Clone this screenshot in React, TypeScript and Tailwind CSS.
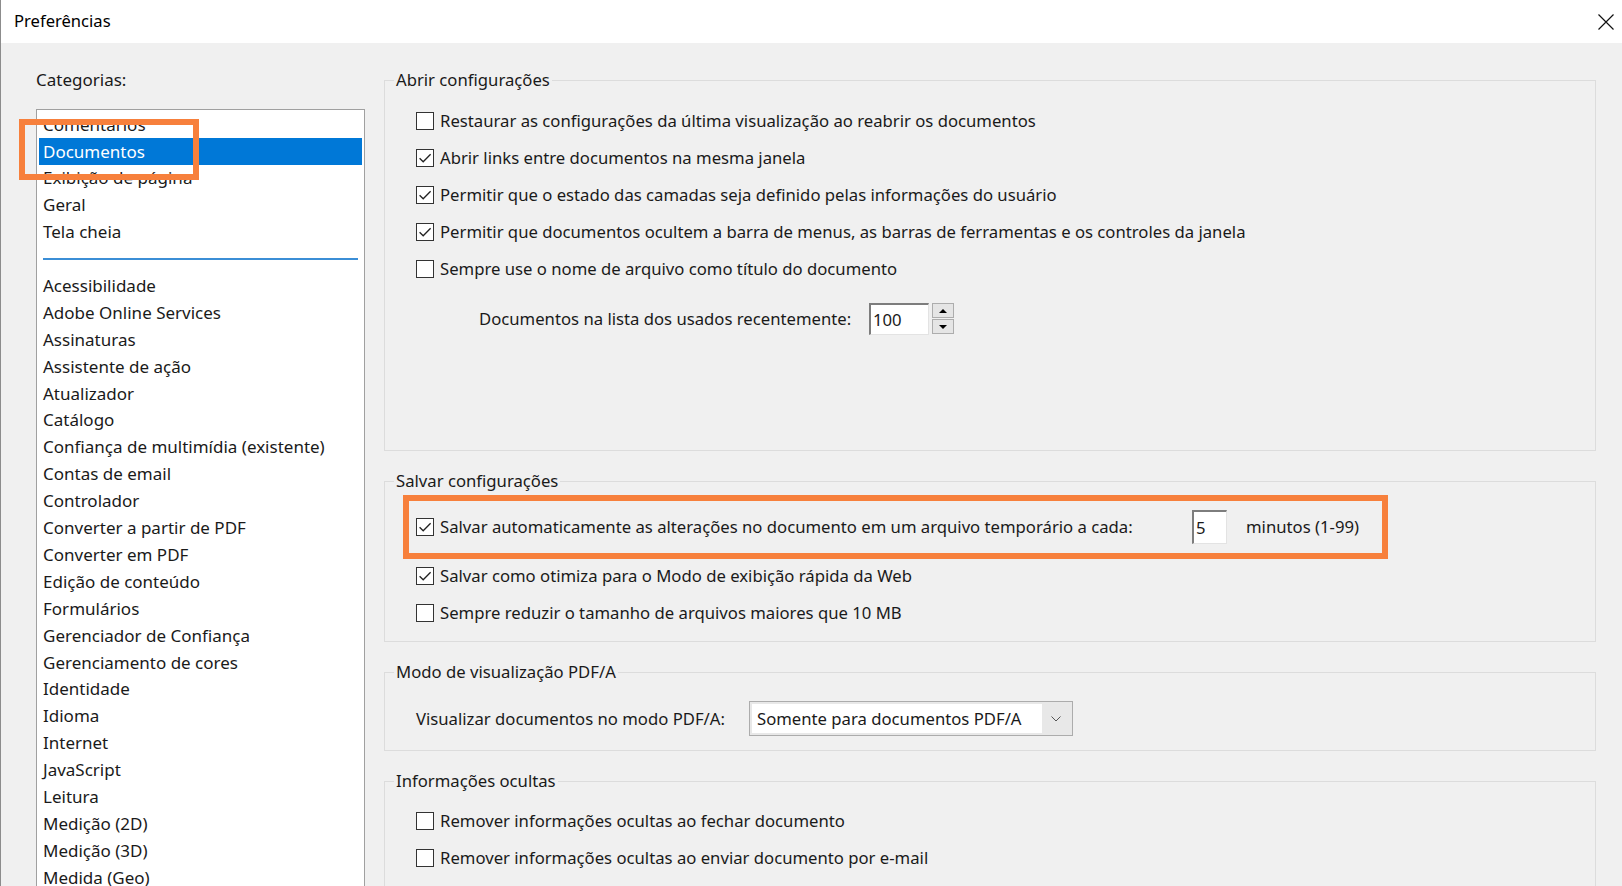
import React from "react";

const topCategories = ["Comentários", "Documentos", "Exibição de página", "Geral", "Tela cheia"];

const categories = [
  "Acessibilidade",
  "Adobe Online Services",
  "Assinaturas",
  "Assistente de ação",
  "Atualizador",
  "Catálogo",
  "Confiança de multimídia (existente)",
  "Contas de email",
  "Controlador",
  "Converter a partir de PDF",
  "Converter em PDF",
  "Edição de conteúdo",
  "Formulários",
  "Gerenciador de Confiança",
  "Gerenciamento de cores",
  "Identidade",
  "Idioma",
  "Internet",
  "JavaScript",
  "Leitura",
  "Medição (2D)",
  "Medição (3D)",
  "Medida (Geo)",
];

function Checkbox({ checked }: { checked?: boolean }) {
  return (
    <span className="flex h-[18px] w-[18px] shrink-0 items-center justify-center border border-[#333333] bg-white">
      {checked && (
        <svg viewBox="0 0 16 16" className="h-[16px] w-[16px]">
          <path d="M2.6 8.2 L6.2 11.8 L13.6 4.3" fill="none" stroke="#222222" strokeWidth="1.3" />
        </svg>
      )}
    </span>
  );
}

function CheckRow({ checked, label }: { checked?: boolean; label?: string }) {
  return (
    <div className="flex h-[37px] items-center gap-[6px]">
      <Checkbox checked={checked} />
      {label && <span className="whitespace-nowrap">{label}</span>}
    </div>
  );
}

function Group({ title, className, children }: { title: string; className: string; children: React.ReactNode }) {
  return (
    <fieldset className={"border border-[#dcdcdc] pl-[9px] " + className}>
      <legend className="px-[2px] leading-[24px]">{title}</legend>
      <div className="pl-[22px]">{children}</div>
    </fieldset>
  );
}

function Spinner() {
  return (
    <div className="ml-[3px] flex h-[32px] w-[22px] flex-col gap-[1px]">
      <button className="flex h-[15px] items-center justify-center border border-[#adadad] bg-[#e5e5e5]">
        <svg viewBox="0 0 8 4" className="h-[4px] w-[8px]">
          <path d="M0 4 L4 0 L8 4 Z" fill="#000" />
        </svg>
      </button>
      <button className="flex h-[15px] items-center justify-center border border-[#adadad] bg-[#e5e5e5]">
        <svg viewBox="0 0 8 4" className="h-[4px] w-[8px]">
          <path d="M0 0 L4 4 L8 0 Z" fill="#000" />
        </svg>
      </button>
    </div>
  );
}

export default function App() {
  return (
    <div className="flex h-[886px] w-[1622px] flex-col overflow-hidden border-l border-[#8c8c8c] bg-[#f0f0f0] font-['Noto_Sans',sans-serif] text-[17px] text-[#1a1a1a]">
      {/* Title bar */}
      <div className="flex h-[43px] shrink-0 items-center justify-between bg-white pl-[13px] pr-[8px]">
        <span className="text-[16.6px] text-black">Preferências</span>
        <svg viewBox="0 0 16 16" className="h-[16px] w-[16px]">
          <path d="M0.5 0.5 L15.5 15.5 M15.5 0.5 L0.5 15.5" stroke="#111" strokeWidth="1.2" />
        </svg>
      </div>

      <div className="flex flex-1">
        {/* Categories */}
        <div className="w-[383px] shrink-0 pl-[35px] pt-[25px]">
          <div className="leading-[24px]">Categorias:</div>
          <div className="mt-[17px] h-[800px] w-[329px] overflow-hidden border border-[#a0a0a0] bg-white pt-[1px]">
            {topCategories.map((c) => (
              <div
                key={c}
                className={
                  "mx-[2px] flex h-[26.9px] items-center pl-[4px] " +
                  (c === "Documentos" ? "bg-[#0078d7] text-white" : "")
                }
              >
                {c}
              </div>
            ))}
            <div className="flex h-[26.9px] items-center px-[6px]">
              <div className="h-[2px] w-full bg-[#3b8ed6]" />
            </div>
            {categories.map((c) => (
              <div key={c} className="mx-[2px] flex h-[26.9px] items-center pl-[4px]">
                {c}
              </div>
            ))}
          </div>
        </div>

        {/* Settings */}
        <div className="flex w-[1212px] shrink-0 flex-col pt-[25px] text-[16.7px]">
          <Group title="Abrir configurações" className="h-[383px]">
            <div className="pt-[10px]">
              <CheckRow label="Restaurar as configurações da última visualização ao reabrir os documentos" />
              <CheckRow checked label="Abrir links entre documentos na mesma janela" />
              <CheckRow checked label="Permitir que o estado das camadas seja definido pelas informações do usuário" />
              <CheckRow
                checked
                label="Permitir que documentos ocultem a barra de menus, as barras de ferramentas e os controles da janela"
              />
              <CheckRow label="Sempre use o nome de arquivo como título do documento" />
              <div className="mt-[16px] flex h-[32px] items-center pl-[63px]">
                <span className="w-[390px]">Documentos na lista dos usados recentemente:</span>
                <div className="flex h-[32px] w-[60px] items-center border-l-2 border-t-2 border-b border-r border-l-[#7d7d7d] border-t-[#7d7d7d] border-b-[#e3e3e3] border-r-[#e3e3e3] bg-white pl-[2px]">
                  100
                </div>
                <Spinner />
              </div>
            </div>
          </Group>

          <Group title="Salvar configurações" className="mt-[18px] h-[173px]">
            <div className="ml-[-13px] mt-[2px] flex h-[64px] w-[985px] items-center border-[6px] border-[#f7803c] pl-[7px]">
              <Checkbox checked />
              <span className="ml-[6px] w-[746px] whitespace-nowrap">
                Salvar automaticamente as alterações no documento em um arquivo temporário a cada:
              </span>
              <div className="ml-[6px] flex h-[34px] w-[35px] items-center border-l-2 border-t-2 border-b border-r border-l-[#7d7d7d] border-t-[#7d7d7d] border-b-[#e3e3e3] border-r-[#e3e3e3] bg-white pl-[2px]">
                5
              </div>
              <span className="ml-[19px]">minutos (1-99)</span>
            </div>
            <div className="-mt-[2px]">
              <CheckRow checked label="Salvar como otimiza para o Modo de exibição rápida da Web" />
              <CheckRow label="Sempre reduzir o tamanho de arquivos maiores que 10 MB" />
            </div>
          </Group>

          <Group title="Modo de visualização PDF/A" className="mt-[18px] h-[91px]">
            <div className="mt-[17px] flex h-[35px] items-center">
              <span className="w-[333px]">Visualizar documentos no modo PDF/A:</span>
              <div className="flex h-[35px] w-[324px] items-center border border-[#acacac] bg-[#e8e8e8] p-[2px]">
                <div className="flex h-full flex-1 items-center bg-white pl-[5px]">Somente para documentos PDF/A</div>
                <div className="flex w-[28px] items-center justify-center">
                  <svg viewBox="0 0 10 6" className="h-[6px] w-[10px]">
                    <path d="M0.5 0.5 L5 5 L9.5 0.5" fill="none" stroke="#555" strokeWidth="1" />
                  </svg>
                </div>
              </div>
            </div>
          </Group>

          <Group title="Informações ocultas" className="mt-[18px] h-[200px] shrink-0">
            <div className="pt-[9px]">
              <CheckRow label="Remover informações ocultas ao fechar documento" />
              <CheckRow label="Remover informações ocultas ao enviar documento por e-mail" />
              <CheckRow />
            </div>
          </Group>
        </div>
      </div>

      {/* orange highlight around the selected category */}
      <div className="pointer-events-none absolute left-[19px] top-[119px] h-[61px] w-[180px] border-[6px] border-[#f7803c]" />
    </div>
  );
}
